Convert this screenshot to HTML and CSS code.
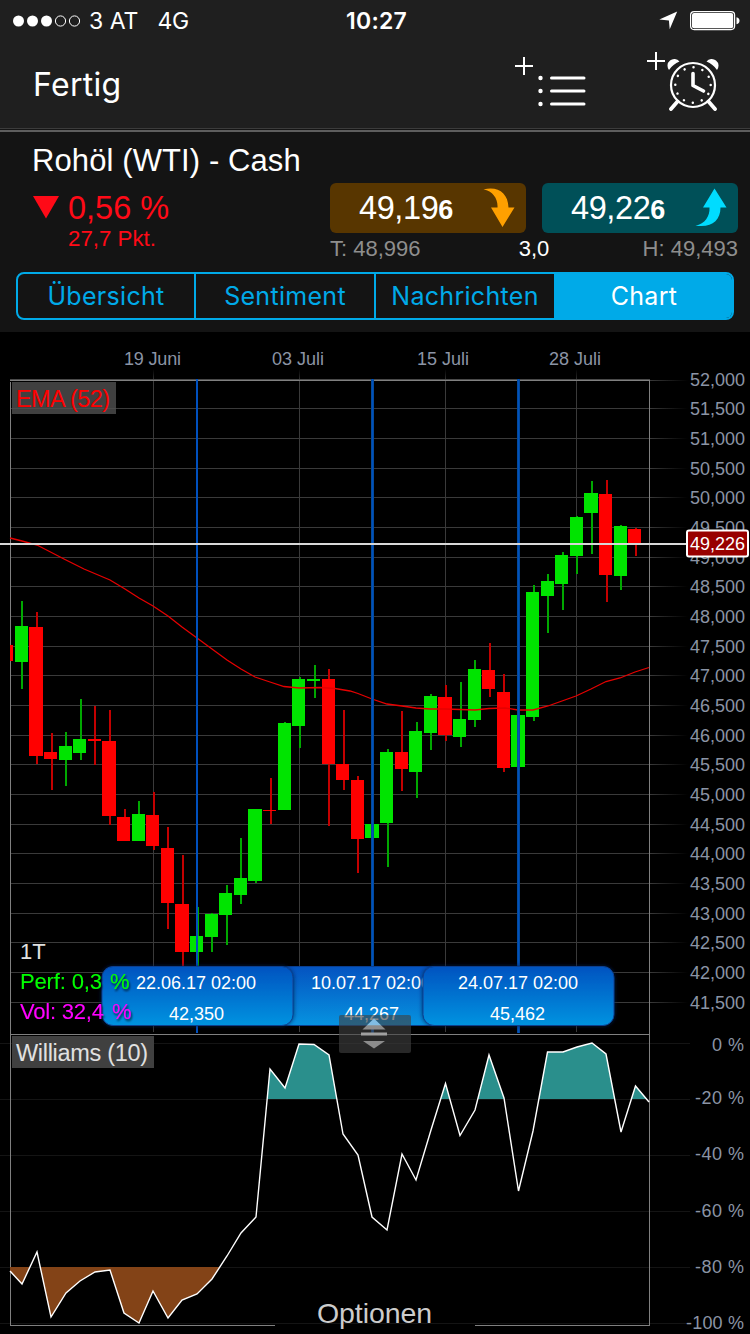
FILE: index.html
```html
<!DOCTYPE html>
<html lang="de">
<head>
<meta charset="utf-8">
<title>Rohöl (WTI) - Cash</title>
<link rel="stylesheet" href="styles.css">
</head>
<body>
<header class="top">
  <div class="status">
    <div class="carrier">
      <svg class="signal" width="68" height="12" viewBox="0 0 68 12"><g fill="#fff"><circle cx="5.5" cy="6" r="5.5"/><circle cx="19.5" cy="6" r="5.5"/><circle cx="33.5" cy="6" r="5.5"/></g><g fill="none" stroke="#fff"><circle cx="47.5" cy="6" r="5.1"/><circle cx="61.5" cy="6" r="5.1"/></g></svg>
      <span class="operator">3 AT</span><span class="network">4G</span>
    </div>
    <div class="clock">10:27</div>
    <div class="power">
      <svg width="19" height="19" viewBox="0 0 19 19"><path d="M18.200 .5 10.700 18.300 9.900 9.500 .3 8.500Z" fill="#fff"/></svg>
      <svg width="50" height="20" viewBox="0 0 50 20"><rect x=".6" y=".6" width="44" height="18" rx="3.500" fill="none" stroke="#fff" stroke-width="1.200"/><rect x="2" y="2" width="41.200" height="15.200" rx="2" fill="#fff"/><path d="M46.500 6.200q3 .7 3 3.500t-3 3.500z" fill="#fff"/></svg>
    </div>
  </div>
  <div class="nav">
    <span class="done">Fertig</span>
    <div class="actions">
      <svg width="72" height="56" viewBox="0 0 72 56" fill="none" stroke="#fff"><path d="M0 11H18M9 2V20" stroke-width="2"/><path d="M36.500 23H69M36.500 36H69M36.500 49H69" stroke-width="3" stroke-linecap="round"/><path d="M25.500 23h.01M25.500 36h.01M25.500 49h.01" stroke-width="4.400" stroke-linecap="round"/></svg>
      <svg class="alarm" width="72" height="60" viewBox="0 0 72 60" fill="none" stroke="#fff"><path d="M0 10H18M9 1V19" stroke-width="2"/><path d="M22 19A6.300 6.300 0 1 1 32.500 10.500Q26 13 22 19ZM70 19A6.300 6.300 0 1 0 59.500 10.500Q66 13 70 19Z" fill="#fff" stroke="none"/><circle cx="46" cy="34" r="22" stroke-width="2.200"/><circle cx="46" cy="34" r="17.700" stroke-width="2.500" stroke-linecap="round" stroke-dasharray=".01 9.258"/><path d="M46 22.500V34.500L56.500 40" stroke-width="3.600" stroke-linecap="round" stroke-linejoin="round"/><path d="M30.500 50.500 24 58M61.500 50.500 68 58" stroke-width="3.800" stroke-linecap="round"/></svg>
    </div>
  </div>
</header>
<section class="quote">
  <h1 class="name">Rohöl (WTI) - Cash</h1>
  <div class="figures">
    <div class="change">
      <svg class="down" width="26" height="23" viewBox="0 0 26 23"><path d="M0 0H26L13 22.500Z" fill="#ff0a17"/></svg>
      <div class="deltas"><div class="percent">0,56 %</div><div class="points">27,7 Pkt.</div></div>
    </div>
    <div class="prices">
      <div class="buttons">
        <div class="price sell"><span>49,19<b>6</b></span>
          <svg width="33" height="40" viewBox="0 0 33 40"><path d="M.5 1.500C15-2 25 5 25.500 19.500H31.500L19.500 39 8 19.500H14.500C15 11 10 3 .5 1.500Z" fill="#ffa000"/></svg></div>
        <div class="price buy"><span>49,22<b>6</b></span>
          <svg width="33" height="40" viewBox="0 0 33 40"><path d="M.5 37.500C16 40 25.500 33 25.500 19.500H31.500L19.500 .5 8 19.500H14.500C15 28 10 36 .5 37.500Z" fill="#00dcff"/></svg></div>
      </div>
      <div class="range"><span>T: 48,996</span><span class="spread">3,0</span><span class="high">H: 49,493</span></div>
    </div>
  </div>
  <nav class="tabs"><span class="tab">Übersicht</span><span class="tab">Sentiment</span><span class="tab">Nachrichten</span><span class="tab active">Chart</span></nav>
</section>
<main>
<svg class="chart" width="750" height="1002" viewBox="0 332 750 1002">
  <defs>
    <linearGradient id="tip" x1="0" y1="0" x2="0" y2="1"><stop offset="0" stop-color="#0453c0"/><stop offset="1" stop-color="#0693e0"/></linearGradient>
    <linearGradient id="fade" gradientUnits="userSpaceOnUse" x1="650" y1="0" x2="688" y2="0"><stop offset="0" stop-color="#3a3a3a"/><stop offset="1" stop-color="#000"/></linearGradient>
    <linearGradient id="tick" x1="0" y1="0" x2="0" y2="1"><stop offset="0" stop-color="#000"/><stop offset="1" stop-color="#3a3a3a"/></linearGradient>
    <linearGradient id="upper" x1="0" y1="0" x2="0" y2="1"><stop offset="0" stop-color="#80bde4"/><stop offset=".6" stop-color="#80bde4"/><stop offset=".65" stop-color="#8c8c8c"/></linearGradient>
    <clipPath id="above"><rect x="10" y="1036" width="640" height="63"/></clipPath>
    <clipPath id="below"><rect x="10" y="1267" width="640" height="58"/></clipPath>
    <filter id="shadow" x="-10%" y="-20%" width="120%" height="140%"><feDropShadow dx="0" dy="0" stdDeviation="2" flood-color="#001c50" flood-opacity=".9"/></filter>
    <filter id="textshadow" x="-10%" y="-20%" width="120%" height="150%"><feDropShadow dx="1" dy="2" stdDeviation="1" flood-color="#000" flood-opacity=".8"/></filter>
  </defs>
  <g id="grid" shape-rendering="crispEdges"></g>
  <g shape-rendering="crispEdges" fill="#808080">
    <rect x="10" y="379" width="640" height="1" fill="#4a4a4a"/><rect x="10" y="380" width="640" height="1"/>
    <rect x="10" y="382" width="1" height="944"/><rect x="649" y="380" width="1" height="946"/>
    <rect x="10" y="1034" width="640" height="1"/><rect x="10" y="1325" width="265" height="1"/><rect x="475" y="1325" width="175" height="1"/>
  </g>
  <g class="axis">
    <text x="124" y="365" textLength="57">19 Juni</text><text x="272" y="365" textLength="52">03 Juli</text>
    <text x="417" y="365" textLength="52">15 Juli</text><text x="549" y="365" textLength="52">28 Juli</text>
  </g>
  <g id="prices" class="axis"></g>
  <g id="candles" shape-rendering="crispEdges"></g>
  <path class="ema" d="M10 538 22 541 37 545 64 559 84 569 110 580 125 589 139 598 153 606 168 616 182 627 197 638 212 649 227 660 241 669 255 677 270 682 284 686.500 299 688 320 687.500 335 688.500 350 691 358 693.500 372 699 387 704 402 706 416 708 430 709 445 709 475 710 489 708.500 505 708 518 710 533 710 548 706 562 701 576 696 591 689 606 681.500 620 678 635 672 649 667.500"/>
  <g shape-rendering="crispEdges" fill="#0050be">
    <rect x="196" y="379" width="2" height="654"/>
    <rect x="371" y="379" width="3" height="654" fill="#024a9c"/><rect x="372" y="379" width="1" height="654"/>
    <rect x="517" y="379" width="3" height="654" fill="#024a9c"/><rect x="518" y="379" width="1" height="654"/>
  </g>
  <rect x="0" y="543" width="687" height="2" fill="#d8d8d8"/>
  <rect x="687" y="530.500" width="61" height="26" rx="2" fill="#980000" stroke="#fff" stroke-width="2"/>
  <text class="last" x="690" y="550" textLength="55">49,226</text>
  <rect x="12" y="382" width="104" height="32" fill="#404040"/>
  <path d="M12 408.500H116" stroke="#4c4c4c"/>
  <text class="label" x="16" y="407" textLength="94" fill="#f00">EMA (52)</text>
  <rect x="12" y="1036" width="142" height="32" fill="#404040"/>
  <text class="label" x="16" y="1061" textLength="132" fill="#e0e0e0">Williams (10)</text>
  <text class="info" x="20" y="959" fill="#e0e0e0">1T</text>
  <g class="tips">
    <rect x="277" y="966.500" width="192" height="59" rx="11"/>
    <text x="311" y="989" textLength="120">10.07.17 02:00</text><text x="344" y="1020" textLength="55">44,267</text>
    <g filter="url(#shadow)"><rect x="102" y="966.500" width="191" height="59" rx="11"/><rect x="423" y="966.500" width="191" height="59" rx="11"/></g>
    <text x="136" y="989" textLength="120">22.06.17 02:00</text><text x="169" y="1020" textLength="55">42,350</text>
    <text x="458" y="989" textLength="120">24.07.17 02:00</text><text x="490" y="1020" textLength="55">45,462</text>
  </g>
  <g class="info" filter="url(#textshadow)"><text x="20" y="989" textLength="82" fill="#0f0">Perf: 0,3</text><text x="110" y="989" fill="#0f0">%</text><text x="20" y="1019" textLength="84" fill="#f0f">Vol: 32,4</text><text x="112" y="1019" fill="#f0f">%</text></g>
  <g id="williams"></g>
  <rect x="339" y="1015" width="72" height="38" rx="2" fill="#404040" fill-opacity=".62"/>
  <path class="behind" d="M345 1020H398" />
  <path d="M362.500 1029.500 374 1018.500 385.500 1029.500Z" fill="url(#upper)"/><path d="M361 1034H387" stroke="#a0a0a0" stroke-width="3"/><path d="M363 1041H385L374 1048.500Z" fill="#8c8c8c"/>
  <text class="options" x="317" y="1323" textLength="115">Optionen</text>
</svg>
</main>
<script src="chart.js"></script>
</body>
</html>
```

FILE: styles.css
```css
* { box-sizing: border-box; }
body { margin: 0; width: 750px; height: 1334px; overflow: hidden; background: #000; color: #fff; font-family: "Liberation Sans", Arial, sans-serif; }
svg { display: block; flex: none; }

.top { height: 132px; background: #1f1f1f; border-bottom: 2px solid #5e5e5e; box-shadow: inset 0 -1px #151515, inset 0 -2px #3c3c3c; font-family: Inter, sans-serif; }
.status { height: 40px; display: grid; grid-template-columns: 1fr auto 1fr; align-items: center; padding: 1px 10px 0 13px; }
.carrier { display: flex; align-items: center; font-size: 23px; }
.operator { margin-left: 8px; }
.network { margin-left: 19px; letter-spacing: -.3px; }
.clock { font-size: 23px; font-weight: 600; letter-spacing: .2px; }
.power { display: flex; justify-content: flex-end; align-items: center; gap: 12px; }
.nav { height: 88px; display: flex; justify-content: space-between; padding: 15px 31px 0 33px; }
.done { font-size: 32px; line-height: 60px; letter-spacing: .3px; }
.actions { display: flex; gap: 60px; }
.alarm { margin-top: -4px; }

.quote { height: 200px; background: #141414; padding: 11px 12px 0 32px; }
.name { margin: 0; font-size: 31px; line-height: 35px; font-weight: 400; letter-spacing: .1px; }
.figures { display: flex; justify-content: space-between; padding-top: 5px; }
.change { display: flex; gap: 9px; padding-left: 1px; color: #ff0a17; }
.down { margin-top: 13px; }
.percent { font-size: 32.500px; line-height: 38px; margin-top: 6px; }
.points { font-size: 22.300px; line-height: 24px; }
.prices { width: 408px; }
.buttons { display: flex; gap: 16px; }
.price { width: 196px; height: 50px; border-radius: 6px; display: flex; align-items: center; justify-content: space-between; padding: 0 10px 0 29px; font-size: 32.500px; letter-spacing: -.4px; }
.price b { font-size: 27px; }
.sell { background: #583600; }
.buy { background: #005058; }
.range { display: grid; grid-template-columns: 1fr auto 1fr; font-size: 22px; line-height: 32px; color: #8e8e8e; }
.spread { color: #fff; }
.high { text-align: right; }
.tabs { display: grid; grid-template-columns: 176px 180px 180px 178px; width: 718px; height: 48px; margin: 7px 0 0 -16px; border: 2px solid #00aae8; border-radius: 8px; overflow: hidden; font: 25px/44px Inter, sans-serif; color: #00aae8; text-align: center; letter-spacing: .3px; }
.tab + .tab { border-left: 2px solid #00aae8; }
.tabs .active { background: #00aae8; color: #fff; }

.axis { font-size: 18px; fill: #8b94a5; }
.last { font-size: 18px; fill: #fff; }
.label { font-size: 23.500px; }
.info { font-size: 22px; }
.tips rect { fill: url(#tip); stroke: #0a3f90; stroke-width: 1; }
.tips text { font-size: 18px; fill: #fff; }
.options { font-size: 28.500px; fill: #ccc; }
.ema { fill: none; stroke: #e60000; stroke-width: 1.300; }
.line { fill: none; stroke: #fff; stroke-width: 1.400; }
.behind { fill: none; }
```

FILE: chart.js
```js
const NS = 'http://www.w3.org/2000/svg';
function add(parent, tag, attrs, text) {
  const el = document.createElementNS(NS, tag);
  for (const k in attrs) el.setAttribute(k, attrs[k]);
  if (text) el.textContent = text;
  parent.appendChild(el);
  return el;
}
const byId = (id) => document.getElementById(id);
const rect = (p, x, y, width, height, fill) => add(p, 'rect', { x, y, width, height, fill });

// Price and percent grid
const grid = byId('grid');
const rows = [380, 408, 438, 468, 497, 527, 557, 586, 616, 646, 675, 705, 735, 764, 794, 824, 853, 883, 913, 942, 972, 1002];
rows.forEach((y, i) => {
  rect(grid, 10, y, 640, 1, '#3a3a3a');
  rect(grid, 650, y, 38, 1, 'url(#fade)');
  const v = 52000 - i * 500;
  const label = Math.floor(v / 1000) + ',' + String(v % 1000).padStart(3, '0');
  add(byId('prices'), 'text', { x: 690, y: y + 7 - (i === 0 ? 1 : 0), textLength: 55, class: i === 0 ? 'edge' : 'value' }, label);
});
[153, 299, 445, 576].forEach((x) => {
  rect(grid, x, 382, 1, 650, '#3a3a3a');
  rect(grid, x, 369, 1, 13, 'url(#tick)');
});
[[1043, '0 %', 32, 1051], [1099, '-20 %', 49, 1104], [1155, '-40 %', 49, 1160], [1211, '-60 %', 49, 1217], [1267, '-80 %', 49, 1273], [1323, '-100 %', 58, 1329]].forEach(([y, s, w, base]) => {
  rect(grid, 0, y, 690, 1, '#141414');
  add(byId('prices'), 'text', { x: 744 - w, y: base, textLength: w }, s);
});

// Candles: direction, x, width, body top, body bottom, wick x, wick top, wick bottom
const data = [
  ['r', 10, 3, 645, 661, 10, 645, 661], ['g', 15, 13, 626, 662, 21, 601, 689], ['r', 29, 14, 627, 756, 36, 612, 764],
  ['r', 44, 13, 752, 759, 51, 733, 790], ['g', 59, 13, 746, 760, 65, 732, 786], ['g', 73, 13, 739, 753, 80, 699, 760],
  ['r', 88, 13, 739, 741, 94, 706, 765], ['r', 102, 14, 741, 816, 109, 710, 825], ['r', 117, 13, 817, 841, 124, 809, 841],
  ['g', 132, 13, 814, 841, 138, 801, 841], ['r', 146, 13, 815, 846, 153, 792, 850], ['r', 161, 13, 848, 903, 167, 827, 929],
  ['r', 175, 14, 904, 952, 182, 855, 970], ['g', 190, 13, 936, 952, 197, 907, 970], ['g', 205, 13, 914, 937, 211, 913, 952],
  ['g', 219, 13, 893, 915, 226, 885, 945], ['g', 234, 13, 878, 895, 240, 838, 904], ['g', 248, 14, 809, 881, 255, 809, 883],
  ['r', 263, 13, 810, 811, 270, 778, 824], ['g', 278, 13, 723, 810, 284, 722, 810], ['g', 292, 13, 679, 726, 299, 677, 748],
  ['g', 307, 13, 679, 681, 314, 665, 698], ['r', 322, 13, 679, 764, 328, 669, 826], ['r', 336, 13, 764, 780, 343, 710, 790],
  ['r', 351, 13, 780, 839, 357, 776, 873], ['g', 365, 14, 824, 838, 372, 808, 879], ['g', 380, 13, 752, 823, 387, 749, 867],
  ['r', 395, 13, 752, 769, 401, 711, 791], ['g', 409, 13, 731, 772, 416, 722, 798], ['g', 424, 13, 696, 733, 430, 694, 750],
  ['r', 438, 14, 697, 735, 445, 685, 741], ['g', 453, 13, 719, 737, 460, 682, 747], ['g', 468, 13, 669, 720, 474, 660, 727],
  ['r', 482, 13, 670, 689, 489, 643, 697], ['r', 497, 13, 692, 768, 503, 674, 772], ['g', 511, 14, 715, 767, 518, 712, 780],
  ['g', 526, 13, 592, 717, 533, 585, 721], ['g', 541, 13, 581, 596, 547, 574, 633], ['g', 555, 13, 555, 584, 562, 552, 610],
  ['g', 570, 13, 517, 556, 576, 516, 574], ['g', 584, 14, 493, 513, 591, 481, 554], ['r', 599, 13, 494, 575, 606, 480, 602],
  ['g', 614, 13, 526, 576, 620, 525, 590], ['r', 628, 13, 529, 543, 635, 528, 556]
];
const candles = byId('candles');
data.forEach(([c, x, w, top, bottom, wx, high, low]) => {
  rect(candles, wx, high, 2, low - high, c === 'g' ? '#00a800' : '#c40000');
  rect(candles, x, top, w, bottom - top, c === 'g' ? '#00e400' : '#ff0000');
});

// Williams oscillator with shaded overbought and oversold zones
const pts = '10,1271 22,1284 37,1252 51,1317 66,1293 80,1281 95,1272 110,1270 124,1313 139,1323 153,1291 168,1318 182,1300 197,1294 212,1279 227,1256 241,1233 256,1217 270,1069 285,1088 299,1044 314,1044.5 329,1055 343,1134 358,1155 372,1217 387,1230 402,1154 416,1180 431,1130 445.500,1083.500 460,1135.500 475,1110 489,1055 504,1098 518.500,1191 533,1131 547.500,1052 563,1052 577,1047 592,1043 606,1054 621,1132 635.500,1086 649,1102';
const w = byId('williams');
add(w, 'polygon', { points: `10,1099 ${pts} 649,1099`, fill: '#2a8f8c', 'clip-path': 'url(#above)' });
add(w, 'polygon', { points: `10,1267 ${pts} 649,1267`, fill: '#834317', 'clip-path': 'url(#below)' });
add(w, 'polyline', { points: pts, class: 'line' });
```
